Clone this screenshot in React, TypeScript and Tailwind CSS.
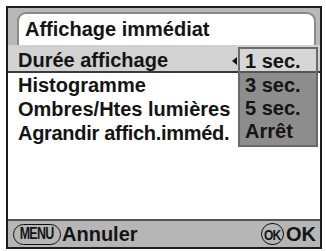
export default function App() {
  const rows = ["Histogramme", "Ombres/Htes lumières"];
  const opts = ["3 sec.", "5 sec.", "Arrêt"];
  return (
    <div className="w-[326px] h-[251px] bg-white pt-[6px] pl-[6px] font-['Liberation_Sans',Arial,sans-serif] font-bold text-[#141414]">
      <div className="relative w-[316px] h-[243px] border-2 border-[#1e1e1e] flex flex-col bg-white">
        {/* header tab */}
        <div className="h-[37px] bg-[#b8b8b8] flex items-end pl-[9px] pr-[4px]">
          <div className="flex-1 h-[33px] bg-white border-2 border-b-0 border-[#8a8a8a] rounded-t-[9px] pl-[6px] pt-[3px] text-[20px] leading-[24px]">
            Affichage immédiat
          </div>
        </div>
        {/* list */}
        <div className="flex flex-col text-[20px] leading-[24px]">
          <div className="h-[28px] bg-[#d2d2d2] border-b-2 border-[#3a3a3a] pl-[10px] pt-[3px]">Durée affichage</div>
          {rows.map((r) => (
            <div key={r} className="h-[24px] pl-[10px]">{r}</div>
          ))}
          <div className="h-[24px] pl-[10px] tracking-[-0.3px]">Agrandir affich.imméd.</div>
        </div>
        {/* arrow */}
        <div className="absolute left-[224px] top-[49px] w-0 h-0 border-y-[4px] border-y-transparent border-r-[5px] border-r-[#111]" />
        {/* dropdown */}
        <div className="absolute left-[230px] top-[39px] w-[80px] h-[100px] bg-[#8d8d8d] border-2 border-[#6a6a6a] flex flex-col text-[20px] leading-[24px]">
          <div className="h-[24px] bg-[#d6d6d6] border-b-2 border-[#555] pl-[5px]">1 sec.</div>
          {opts.map((o) => (
            <div key={o} className="h-[23px] pl-[5px]">{o}</div>
          ))}
        </div>
        {/* bottom bar */}
        <div className="mt-auto h-[28px] border-t-2 border-[#555] bg-[#b6b6b6] flex items-center pl-[5px] pr-[4px] text-[20px] leading-[24px]">
          <div className="h-[21px] w-[48px] rounded-full border-[1.5px] border-[#111] flex items-center justify-center overflow-hidden">
            <span className="text-[16px] leading-none tracking-[-1px] scale-x-[0.78] inline-block font-bold">MENU</span>
          </div>
          <span className="ml-[1px]">Annuler</span>
          <div className="ml-auto h-[22px] w-[23px] rounded-full border-[1.5px] border-[#111] flex items-center justify-center overflow-hidden">
            <span className="text-[15px] leading-none tracking-[-1px] inline-block scale-x-[0.8]">OK</span>
          </div>
          <span className="ml-[2px]">OK</span>
        </div>
      </div>
    </div>
  );
}
